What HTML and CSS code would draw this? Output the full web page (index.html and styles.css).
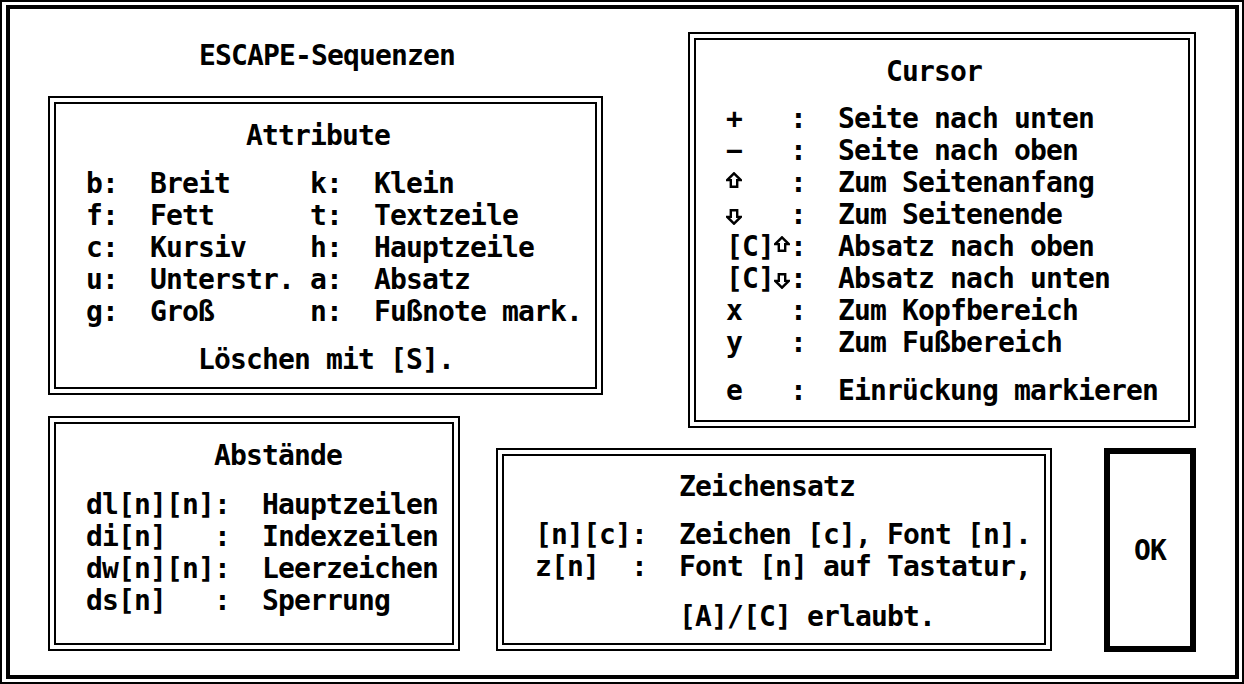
FILE: index.html
```html
<!DOCTYPE html>
<html lang="de">
<head>
<meta charset="utf-8">
<title>ESCAPE-Sequenzen</title>
<link rel="stylesheet" href="styles.css">
</head>
<body>
<div class="dialog">
  <div class="frame">
    <div class="title">ESCAPE-Sequenzen</div>

    <section class="panel attr">
      <div class="inner">
        <div class="line head">Attribute</div>
        <div class="rows">
          <div class="line">b:  Breit     k:  Klein</div>
          <div class="line">f:  Fett      t:  Textzeile</div>
          <div class="line">c:  Kursiv    h:  Hauptzeile</div>
          <div class="line">u:  Unterstr. a:  Absatz</div>
          <div class="line">g:  Groß      n:  Fußnote mark.</div>
        </div>
        <div class="line foot">Löschen mit [S].</div>
      </div>
    </section>

    <section class="panel cursor">
      <div class="inner">
        <div class="line head">Cursor</div>
        <div class="rows">
          <div class="line">+   :  Seite nach unten</div>
          <div class="line">−   :  Seite nach oben</div>
          <div class="line"><svg class="arr up" viewBox="0 0 16 16" width="16" height="16"><path d="M8 1.3 L14.8 8.1 H11.2 V14.8 H4.8 V8.1 H1.2 Z"/></svg>   :  Zum Seitenanfang</div>
          <div class="line"><svg class="arr down" viewBox="0 0 16 16" width="16" height="16"><path d="M4.8 1.2 H11.2 V7.9 H14.8 L8 14.7 L1.2 7.9 H4.8 Z"/></svg>   :  Zum Seitenende</div>
          <div class="line">[C]<svg class="arr up" viewBox="0 0 16 16" width="16" height="16"><path d="M8 1.3 L14.8 8.1 H11.2 V14.8 H4.8 V8.1 H1.2 Z"/></svg>:  Absatz nach oben</div>
          <div class="line">[C]<svg class="arr down" viewBox="0 0 16 16" width="16" height="16"><path d="M4.8 1.2 H11.2 V7.9 H14.8 L8 14.7 L1.2 7.9 H4.8 Z"/></svg>:  Absatz nach unten</div>
          <div class="line">x   :  Zum Kopfbereich</div>
          <div class="line">y   :  Zum Fußbereich</div>
        </div>
        <div class="line foot">e   :  Einrückung markieren</div>
      </div>
    </section>

    <section class="panel abst">
      <div class="inner">
        <div class="line head">Abstände</div>
        <div class="rows">
          <div class="line">dl[n][n]:  Hauptzeilen</div>
          <div class="line">di[n]   :  Indexzeilen</div>
          <div class="line">dw[n][n]:  Leerzeichen</div>
          <div class="line">ds[n]   :  Sperrung</div>
        </div>
      </div>
    </section>

    <section class="panel zs">
      <div class="inner">
        <div class="line head">Zeichensatz</div>
        <div class="rows">
          <div class="line">[n][c]:  Zeichen [c], Font [n].</div>
          <div class="line">z[n]  :  Font [n] auf Tastatur,</div>
        </div>
        <div class="line foot">[A]/[C] erlaubt.</div>
      </div>
    </section>

    <button class="ok" type="button">OK</button>
  </div>
</div>
</body>
</html>
```

FILE: styles.css
```css
* {
  box-sizing: border-box;
  margin: 0;
  padding: 0;
}

html, body {
  background: #fff;
}

body {
  width: 1244px;
  height: 684px;
  overflow: hidden;
  color: #000;
  font-family: "DejaVu Sans Mono", "Liberation Mono", monospace;
  font-weight: bold;
  font-size: 28px;
  letter-spacing: -0.86px;
}

.dialog {
  width: 1244px;
  height: 684px;
  border: 2px solid #000;
  padding: 3px 3px 3px 4px;
}

.frame {
  height: 100%;
  border: 4px solid #000;
  display: grid;
  grid-template-columns: 38px 412px 36px 107px 85px 364px 52px 92px 1fr;
  grid-template-rows: 23px 64px 299px 21px 12px 20px 204px 1fr;
}

.title {
  grid-column: 2 / 5;
  grid-row: 2 / 3;
  padding: 8px 0 0 151px;
  line-height: 32px;
  white-space: pre;
}

.panel {
  border: 2px solid #000;
  padding: 4px;
  display: flex;
  flex-direction: column;
}

.inner {
  flex: 1;
  border: 2px solid #000;
  padding-left: 30px;
  padding-top: 16px;
}

.line {
  height: 32px;
  line-height: 32px;
  white-space: pre;
}

/* Attribute */
.attr {
  grid-column: 2 / 5;
  grid-row: 3 / 4;
}
.attr .head { padding-left: 160px; }
.attr .rows { margin-top: 16px; }
.attr .foot { margin-top: 16px; padding-left: 112px; }

/* Cursor */
.cursor {
  grid-column: 6 / 9;
  grid-row: 2 / 6;
}
.cursor .head { padding-left: 160px; }
.cursor .rows { margin-top: 15px; }
.cursor .foot { margin-top: 16px; }

/* Abstände */
.abst {
  grid-column: 2 / 3;
  grid-row: 5 / 8;
  margin-bottom: 1px;
}
.abst .head { padding-left: 128px; }
.abst .rows { margin-top: 17px; }

/* Zeichensatz */
.zs {
  grid-column: 4 / 7;
  grid-row: 7 / 8;
  margin-bottom: 1px;
}
.zs .inner { padding-left: 31px; padding-top: 15px; }
.zs .head { padding-left: 144px; }
.zs .rows { margin-top: 16px; }
.zs .foot { margin-top: 18px; padding-left: 144px; }

/* arrows */
.arr {
  display: inline-block;
  width: 16px;
  height: 16px;
}
.arr path {
  fill: none;
  stroke: #000;
  stroke-width: 2.4;
  stroke-linejoin: miter;
}
.arr.up { vertical-align: 4px; }
.arr.down { vertical-align: -1px; }

/* OK button */
.ok {
  grid-column: 8 / 9;
  grid-row: 7 / 8;
  border: 6px solid #000;
  background: #fff;
  color: #000;
  font: inherit;
  letter-spacing: inherit;
  display: flex;
  align-items: center;
  justify-content: center;
  padding: 0;
}
```
